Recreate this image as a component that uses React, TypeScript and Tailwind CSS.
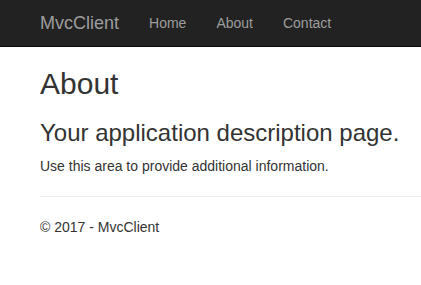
import React from 'react';

const links = ['Home', 'About', 'Contact'];

export default function App() {
  return (
    <div className="min-h-screen bg-white text-[#333] font-['Liberation_Sans',Arial,sans-serif] text-[14px] leading-[20px]">
      <nav className="h-[47px] bg-[#222] border-b border-[#080808] flex items-center pl-[40px]">
        <a className="text-[18px] leading-[20px] text-[#9d9d9d] pr-[15px]">MvcClient</a>
        {links.map(l => (
          <a key={l} className="px-[15px] text-[#9d9d9d]">{l}</a>
        ))}
      </nav>

      <div className="pl-[40px]">
        <h2 className="mt-[20px] mb-[10px] text-[30px] leading-[33px] font-normal">About</h2>
        <h3 className="mt-[20px] mb-[10px] text-[24px] leading-[26.4px] font-normal">Your application description page.</h3>
        <p className="mb-[10px]">Use this area to provide additional information.</p>
        <hr className="mt-[20px] mb-[20px] border-0 border-t border-[#eee]" />
        <footer>
          <p className="mb-[10px]">© 2017 - MvcClient</p>
        </footer>
      </div>
    </div>
  );
}
